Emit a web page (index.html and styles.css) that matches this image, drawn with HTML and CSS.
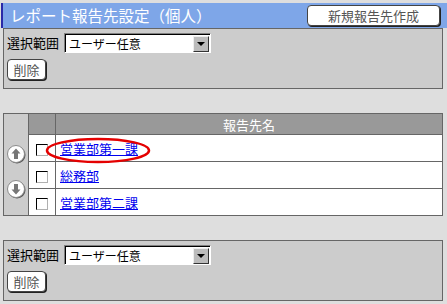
FILE: index.html
```html
<!DOCTYPE html>
<html lang="ja">
<head>
  <meta charset="UTF-8" />
  <title>レポート報告先設定（個人）</title>
  <link rel="stylesheet" href="styles.css">
</head>
<body>
  <div class="titlebar">
    <h1>レポート報告先設定（個人）</h1>
    <button class="btn btn-new">新規報告先作成</button>
  </div>

  <div class="panel">
    <div class="range-row">
      <span class="label">選択範囲</span>
      <div class="select"><span class="select-text">ユーザー任意</span><span class="select-btn"></span></div>
    </div>
    <button class="btn btn-del">削除</button>
  </div>

  <div class="list-wrap">
    <table class="list">
      <tr>
        <td class="move" rowspan="4">
          <svg class="arrow" width="19" height="19" viewBox="0 0 19 19">
            <circle cx="10" cy="10" r="8.5" fill="#555"/>
            <circle cx="9" cy="9" r="8.5" fill="#fff" stroke="#8a8a8a"/>
            <path d="M9 3.5 L13.5 8.5 H11 V14 H7 V8.5 H4.5 Z" fill="#777"/>
          </svg>
          <svg class="arrow" width="19" height="19" viewBox="0 0 19 19">
            <circle cx="10" cy="10" r="8.5" fill="#555"/>
            <circle cx="9" cy="9" r="8.5" fill="#fff" stroke="#8a8a8a"/>
            <path d="M9 14.5 L13.5 9.5 H11 V4 H7 V9.5 H4.5 Z" fill="#777"/>
          </svg>
        </td>
        <th class="chk-col"></th>
        <th class="name-col">報告先名</th>
      </tr>
      <tr>
        <td class="chk"><span class="checkbox"></span></td>
        <td class="name"><a href="#">営業部第一課</a></td>
      </tr>
      <tr>
        <td class="chk"><span class="checkbox"></span></td>
        <td class="name"><a href="#">総務部</a></td>
      </tr>
      <tr>
        <td class="chk"><span class="checkbox"></span></td>
        <td class="name"><a href="#">営業部第二課</a></td>
      </tr>
    </table>
    <svg class="mark" width="106" height="27" viewBox="0 0 106 27">
      <ellipse cx="53" cy="13.5" rx="51" ry="11.5" fill="none" stroke="#e40000" stroke-width="2.5"/>
    </svg>
  </div>

  <div class="panel">
    <div class="range-row">
      <span class="label">選択範囲</span>
      <div class="select"><span class="select-text">ユーザー任意</span><span class="select-btn"></span></div>
    </div>
    <button class="btn btn-del">削除</button>
  </div>
</body>
</html>
```

FILE: styles.css
```css
body {
  margin: 0;
  background-color: #dedede;
  font-family: "Noto Sans CJK JP", "Noto Sans", sans-serif;
  font-size: 13px;
  color: #000;
}

.titlebar {
  margin: 3px 0 0 1px;
  height: 25px;
  border-left: 2px solid #2a2aa8;
  background-color: #7ea6e8;
  display: flex;
  align-items: center;
  justify-content: space-between;
  padding: 0 7px 0 7px;
}

.titlebar h1 {
  margin: 0;
  font-size: 15.5px;
  font-weight: normal;
  line-height: 25px;
  color: #fff;
}

.btn {
  font-family: inherit;
  font-size: 13px;
  line-height: 1;
  color: #555;
  background-color: #fff;
  border: 1px solid #444;
  border-radius: 4px;
  box-shadow: 1px 1px 0 #222;
  padding: 0;
  height: 21px;
  cursor: pointer;
}

.btn-new {
  width: 133px;
}

.btn-del {
  width: 39px;
  display: block;
}

.panel {
  margin-left: 3px;
  width: 440px;
  box-sizing: border-box;
  background-color: #cccccc;
  border: 1px solid #666;
  padding: 4px 3px 8px 3px;
}

.range-row {
  display: flex;
  align-items: center;
  margin-bottom: 6px;
}

.label {
  width: 52px;
  margin-right: 5px;
  line-height: 20px;
}

.select {
  width: 147px;
  height: 20px;
  box-sizing: border-box;
  background-color: #fff;
  border-style: solid;
  border-width: 1px;
  border-color: #808080 #fff #fff #808080;
  box-shadow: inset 1px 1px 0 #000;
  display: flex;
  align-items: center;
  justify-content: space-between;
  padding: 1px 1px 0 4px;
}

.select-text {
  font-size: 12px;
  line-height: 16px;
}

.select-btn {
  width: 16px;
  height: 16px;
  box-sizing: border-box;
  background-color: #bcbcbc;
  border-style: solid;
  border-width: 1px;
  border-color: #eee #333 #333 #eee;
  display: flex;
  align-items: center;
  justify-content: center;
}

.select-btn::after {
  content: "";
  border-left: 4px solid transparent;
  border-right: 4px solid transparent;
  border-top: 4px solid #000;
}

.list-wrap {
  position: relative;
  margin: 24px 0 24px 3px;
  width: 440px;
}

.list {
  width: 440px;
  table-layout: fixed;
  border-collapse: separate;
  border-spacing: 0;
  border: 1px solid #666;
  background-color: #fff;
}

.list td,
.list th {
  padding: 0;
}

.move {
  width: 24px;
  background-color: #cccccc;
  vertical-align: top;
  padding: 31px 0 0 3px !important;
  box-sizing: border-box;
}

.arrow {
  display: block;
  margin-bottom: 16px;
}

.list th {
  height: 20px;
  background-color: #999;
  color: #fff;
  font-weight: normal;
  font-size: 13px;
  border-left: 1px solid #666;
}

.chk-col {
  width: 26px;
}

.chk,
.name {
  height: 26px;
  border-top: 1px solid #666;
  border-left: 1px solid #666;
  vertical-align: middle;
}

.chk {
  text-align: center;
}

.checkbox {
  display: inline-block;
  width: 12px;
  height: 12px;
  box-sizing: border-box;
  border-style: solid;
  border-width: 1px;
  border-color: #000 #b0b0b0 #b0b0b0 #000;
  vertical-align: middle;
  background-color: #fff;
}

.name {
  padding-left: 4px !important;
}

.name a {
  color: #0000ee;
  text-decoration: underline;
}

.mark {
  position: absolute;
  left: 42px;
  top: 24px;
}
```
